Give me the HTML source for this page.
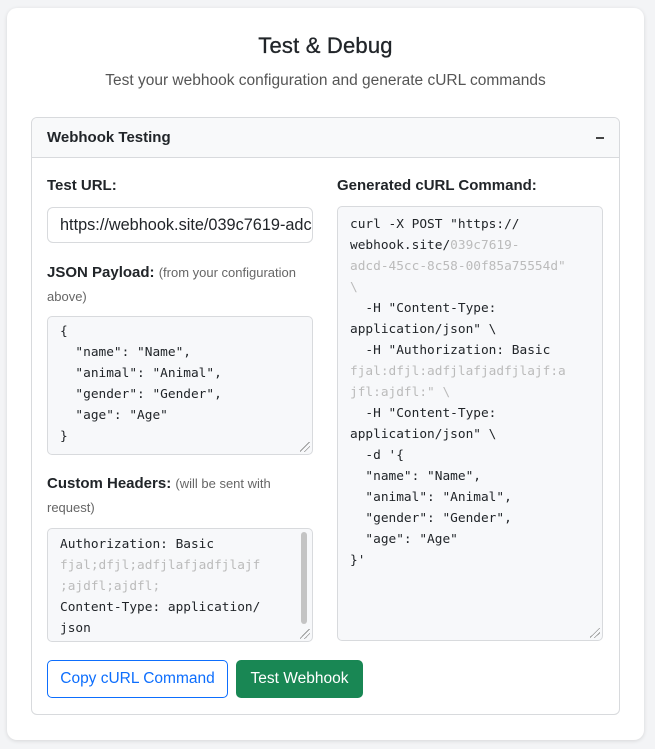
<!DOCTYPE html>
<html><head><meta charset="utf-8"><style>
*{box-sizing:border-box;margin:0;padding:0}
body{width:655px;height:749px;background:#f3f4f6;font-family:"Liberation Sans",Arial,sans-serif;color:#212529;position:relative;overflow:hidden}
.card{position:absolute;left:7px;top:8px;width:637px;height:732px;background:#fff;border-radius:10px;box-shadow:0 1px 4px rgba(0,0,0,.12)}
h1{position:absolute;left:0;width:100%;top:25px;text-align:center;font-size:22px;font-weight:normal;color:#212529;letter-spacing:.2px;-webkit-text-stroke:.3px #212529}
.sub{position:absolute;left:0;width:100%;top:64px;text-align:center;font-size:15.5px;color:#555}
.panel{position:absolute;left:24px;top:109px;width:589px;height:598px;border:1px solid #d8dadd;border-radius:6px;overflow:hidden}
.ph{height:40px;background:#f8f9fa;border-bottom:1px solid #d8dadd;padding:0 15px;font-weight:bold;font-size:15px;line-height:40px;position:relative}
.ph .m{position:absolute;right:15px;top:19px;width:8px;height:1.5px;background:#444}
.lbl{position:absolute;font-weight:bold;font-size:15px;line-height:24px}
.lbl span{font-weight:normal;font-size:13px;color:#666}
.ta{position:absolute;background:#f7f8fa;border:1px solid #d8dadd;border-radius:5px;font-family:"DejaVu Sans Mono","Liberation Mono",monospace;font-size:12.8px;line-height:21px;padding:4px 12px;white-space:pre;color:#212529;overflow:hidden}
.b{color:#bbb}
.grip{position:absolute;right:2px;bottom:2px;width:10px;height:10px;background:linear-gradient(135deg,transparent 45%,#999 45%,#999 52%,transparent 52%,transparent 68%,#999 68%,#999 75%,transparent 75%)}
.inp{position:absolute;left:40px;top:199px;width:266px;height:36px;border:1px solid #d8dadd;border-radius:6px;font-size:16.3px;line-height:34px;padding-left:12px;white-space:nowrap;overflow:hidden}
.btn{position:absolute;top:652px;height:38px;border-radius:5px;font-size:15.5px;line-height:36px;text-align:center}
</style></head><body>
<div class="card">
<h1>Test &amp; Debug</h1>
<div class="sub">Test your webhook configuration and generate cURL commands</div>
<div class="panel"><div class="ph">Webhook Testing<div class="m"></div></div></div>
<div class="lbl" style="left:40px;top:166px">Test URL:</div>
<div class="inp">https://webhook.site/039c7619-adcd-45cc</div>
<div class="lbl" style="left:40px;top:253px;width:270px">JSON Payload: <span>(from your configuration above)</span></div>
<div class="ta" style="left:40px;top:308px;width:266px;height:139px">{
  "name": "Name",
  "animal": "Animal",
  "gender": "Gender",
  "age": "Age"
}<div class="grip"></div></div>
<div class="lbl" style="left:40px;top:464px;width:270px">Custom Headers: <span>(will be sent with request)</span></div>
<div class="ta" style="left:40px;top:520px;width:266px;height:114px;padding-top:5px">Authorization: Basic
<span class="b">fjal;dfjl;adfjlafjadfjlajf</span>
<span class="b">;ajdfl;ajdfl;</span>
Content-Type: application/
json<div style="position:absolute;right:5px;top:3px;width:6px;height:92px;background:#c4c4c4;border-radius:3px"></div><div class="grip"></div></div>
<div class="lbl" style="left:330px;top:166px">Generated cURL Command:</div>
<div class="ta" style="left:330px;top:198px;width:266px;height:435px;padding-top:7px">curl -X POST "https://
webhook.site/<span class="b">039c7619-</span>
<span class="b">adcd-45cc-8c58-00f85a75554d"</span>
<span class="b">\</span>
  -H "Content-Type:
application/json" \
  -H "Authorization: Basic
<span class="b">fjal:dfjl:adfjlafjadfjlajf:a</span>
<span class="b">jfl:ajdfl:" \</span>
  -H "Content-Type:
application/json" \
  -d '{
  "name": "Name",
  "animal": "Animal",
  "gender": "Gender",
  "age": "Age"
}'<div class="grip"></div></div>
<div class="btn" style="left:40px;width:181px;border:1px solid #0d6efd;color:#0d6efd">Copy cURL Command</div>
<div class="btn" style="left:229px;width:127px;background:#198754;color:#fff;border:1px solid #198754">Test Webhook</div>
</div>
</body></html>
